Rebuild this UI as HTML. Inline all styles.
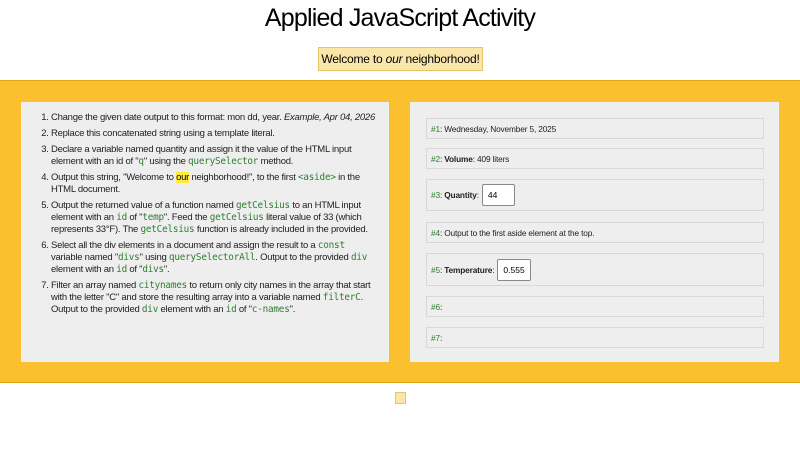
<!DOCTYPE html>
<html><head><style>
*{box-sizing:border-box}
body{margin:0;width:800px;height:450px;background:#fff;font-family:"Liberation Sans",sans-serif;position:relative;overflow:hidden}
h1{position:absolute;top:4px;left:0;width:800px;text-align:center;margin:0;font-size:25px;font-weight:normal;color:#000;letter-spacing:-0.8px}
aside{position:absolute;left:318px;top:47px;width:165px;height:24px;background:#fbe6a9;border:1px solid #e6c66c;font-size:12px;text-align:center;line-height:22px;white-space:nowrap;letter-spacing:-0.2px}
.band{position:absolute;left:0;top:80px;width:800px;height:303px;background:#fbc02d;border-top:1px solid #e0a820;border-bottom:1px solid #e0a820}
.left{position:absolute;left:21px;top:21px;width:368px;height:260px;background:#eee}
.right{position:absolute;left:410px;top:21px;width:369px;height:260px;background:#eee}
ol{margin:0;padding:10px 12px 0 30px;font-size:9.5px;line-height:12px;color:#222;letter-spacing:-0.25px}
li{margin-bottom:4px}
code{font-family:"DejaVu Sans Mono",monospace;color:#2e7d32;font-size:9.3px;letter-spacing:-0.2px}
mark{background:#ffeb3b}
.it{position:absolute;left:16px;width:338px;background:#eee;border:1px solid #d8d8d8;font-size:8.3px;color:#222;padding-left:4px;display:flex;align-items:center;letter-spacing:-0.15px}
.it span.n{color:#2e7d32}
.it input{margin-left:3px;width:33px;height:22px;border:1px solid #888;border-radius:2px;font-size:8.5px;padding-left:5px;background:#fff;font-family:"Liberation Sans",sans-serif}
.sq{position:absolute;left:395px;top:392px;width:11px;height:12px;background:#fbe6a9;border:1px solid #e6c66c}
</style></head><body>
<h1>Applied JavaScript Activity</h1>
<aside>Welcome to <i>our</i> neighborhood!</aside>
<div class="band">
<div class="left"><ol>
<li>Change the given date output to this format: mon dd, year. <i>Example, Apr 04, 2026</i></li>
<li>Replace this concatenated string using a template literal.</li>
<li>Declare a variable named quantity and assign it the value of the HTML input element with an id of "<code>q</code>" using the <code>querySelector</code> method.</li>
<li>Output this string, "Welcome to <mark>our</mark> neighborhood!", to the first <code>&lt;aside&gt;</code> in the HTML document.</li>
<li>Output the returned value of a function named <code>getCelsius</code> to an HTML input element with an <code>id</code> of "<code>temp</code>". Feed the <code>getCelsius</code> literal value of 33 (which represents 33°F). The <code>getCelsius</code> function is already included in the provided.</li>
<li>Select all the div elements in a document and assign the result to a <code>const</code> variable named "<code>divs</code>" using <code>querySelectorAll</code>. Output to the provided <code>div</code> element with an <code>id</code> of "<code>divs</code>".</li>
<li>Filter an array named <code>citynames</code> to return only city names in the array that start with the letter "C" and store the resulting array into a variable named <code>filterC</code>. Output to the provided <code>div</code> element with an <code>id</code> of "<code>c-names</code>".</li>
</ol></div>
<div class="right">
<div class="it" style="top:16px;height:21px"><span class="n">#1</span>: Wednesday, November 5, 2025</div>
<div class="it" style="top:46px;height:21px"><span class="n">#2</span>: <b>&nbsp;Volume</b>: 409 liters</div>
<div class="it" style="top:77px;height:32px"><span class="n">#3</span>: <b>&nbsp;Quantity</b>: <input value="44"></div>
<div class="it" style="top:120px;height:21px"><span class="n">#4</span>: Output to the first aside element at the top.</div>
<div class="it" style="top:151px;height:33px"><span class="n">#5</span>: <b>&nbsp;Temperature</b>: <input value="0.555" style="width:34px"></div>
<div class="it" style="top:194px;height:21px"><span class="n">#6</span>:</div>
<div class="it" style="top:225px;height:21px"><span class="n">#7</span>:</div>
</div>
</div>
<div class="sq"></div>
</body></html>
